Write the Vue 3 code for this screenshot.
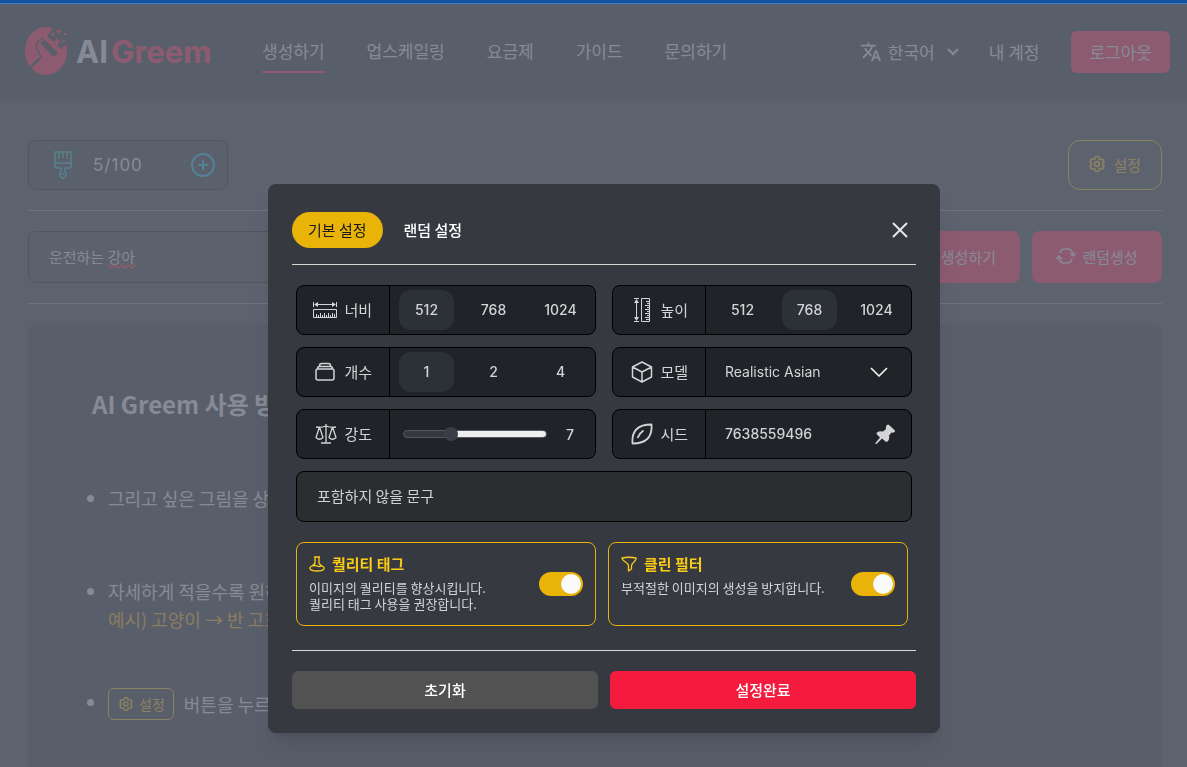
<script setup>
import { ref, computed } from 'vue';

const menu = ['생성하기', '업스케일링', '요금제', '가이드', '문의하기'];
const prompt = ref('운전하는 강아');

const sizes = [512, 768, 1024];
const counts = [1, 2, 4];

const gear = 'M9.594 3.94c.09-.542.56-.94 1.11-.94h2.593c.55 0 1.02.398 1.11.94l.213 1.281c.063.374.313.686.645.87.074.04.147.083.22.127.324.196.72.257 1.075.124l1.217-.456a1.125 1.125 0 011.37.49l1.296 2.247a1.125 1.125 0 01-.26 1.431l-1.003.827c-.293.24-.438.613-.431.992a6.759 6.759 0 010 .255c-.007.378.138.75.43.99l1.005.828c.424.35.534.954.26 1.43l-1.298 2.247a1.125 1.125 0 01-1.369.491l-1.217-.456c-.355-.133-.75-.072-1.076.124a6.57 6.57 0 01-.22.128c-.331.183-.581.495-.644.869l-.213 1.28c-.09.543-.56.941-1.11.941h-2.594c-.55 0-1.02-.398-1.11-.94l-.213-1.281c-.062-.374-.312-.686-.644-.87a6.52 6.52 0 01-.22-.127c-.325-.196-.72-.257-1.076-.124l-1.217.456a1.125 1.125 0 01-1.369-.49l-1.297-2.247a1.125 1.125 0 01.26-1.431l1.004-.827c.292-.24.437-.613.43-.992a6.932 6.932 0 010-.255c.007-.378-.138-.75-.43-.99l-1.004-.828a1.125 1.125 0 01-.26-1.43l1.297-2.247a1.125 1.125 0 011.37-.491l1.216.456c.356.133.751.072 1.076-.124.072-.044.146-.087.22-.128.332-.183.582-.495.644-.869l.214-1.281z';

const tab = ref('basic');
const width = ref(512);
const height = ref(768);
const count = ref(1);
const strength = ref(7);
const model = ref('Realistic Asian');
const seed = ref('7638559496');
const negative = ref('');
const quality = ref(true);
const clean = ref(true);
const open = ref(true);

const fill = computed(() => ((strength.value - 1) / 19) * 100 + '%');

const reset = () => {
  width.value = 512;
  height.value = 768;
  count.value = 1;
  strength.value = 7;
  negative.value = '';
  quality.value = true;
  clean.value = true;
};
</script>

<template>
  <div class="page">
    <div class="loading-bar"></div>

    <header class="header">
      <a href="#" class="logo">
        <svg width="44" height="50" viewBox="0 0 44 50">
          <ellipse cx="21" cy="24" rx="21" ry="24" fill="#f41b3f" />
          <path d="M29 0h15v14l-8 8L22 9z" fill="#27262c" />
          <path d="M15 16l5-3 13 13-5 4z" fill="#27262c" />
          <path d="M19 11l-6 3-2 6 5 10-3 4" fill="none" stroke="#27262c" stroke-width="1.500" />
          <path d="M14 32L3 43" stroke="#27262c" stroke-width="3" />
          <path d="M32 10l1.300 3.700L37 15l-3.700 1.300L32 20l-1.300-3.700L27 15l3.700-1.300zM34 1l1 2.500 2.500 1L35 5.500 34 8l-1-2.500-2.500-1 2.500-1zM28 5l.8 1.700 1.700.8-1.700.8L28 10l-.8-1.700-1.700-.8 1.700-.8zM39 6h2v2h-2zM38 13h2v2h-2zM36 10h1v1h-1z" fill="#f41b3f" />
        </svg>
        <span class="logo-text">AI <b>Greem</b></span>
      </a>
      <nav class="menu">
        <a v-for="(item, i) in menu" :key="item" href="#" :class="{ active: i === 0 }">{{ item }}</a>
      </nav>
      <div class="account">
        <button class="lang">
          <svg width="22" height="22" viewBox="0 0 24 24" fill="currentColor">
            <path d="M12.87 15.07l-2.54-2.51.03-.03c1.74-1.94 2.98-4.17 3.71-6.53H17V4h-7V2H8v2H1v2h11.17C11.5 7.92 10.44 9.75 9 11.35 8.07 10.32 7.3 9.19 6.69 8h-2c.73 1.63 1.73 3.17 2.98 4.56l-5.09 5.02L4 19l5-5 3.11 3.11.76-2.04zM18.5 10h-2L12 22h2l1.12-3h4.75L21 22h2l-4.5-12zm-2.62 7l1.62-4.33L19.12 17h-3.24z" />
          </svg>
          <span>한국어</span>
          <svg class="caret" width="12" height="8" viewBox="0 0 12 8" fill="none" stroke="currentColor" stroke-width="2">
            <path d="M1 1l5 5 5-5" />
          </svg>
        </button>
        <a href="#">내 계정</a>
        <button class="logout">로그아웃</button>
      </div>
    </header>

    <main class="content">
      <div class="toolbar">
        <div class="credit">
          <svg width="20" height="28" viewBox="0 0 20 28" fill="none" stroke="url(#teal)" stroke-width="1.5">
            <defs>
              <linearGradient id="teal" x1="0" y1="0" x2="0" y2="1">
                <stop offset="0" stop-color="#1fae8d" />
                <stop offset="1" stop-color="#17a8e0" />
              </linearGradient>
            </defs>
            <path d="M2 1h16v14q0 2-2 2h-4v4q2 2 0 5-2 2-4 0-2-3 0-5v-4H4q-2 0-2-2zM2 12h16M6 1v7M10 1v6M14 1v7M10 22v2" />
          </svg>
          <span>5/100</span>
          <button class="plus" aria-label="충전">
            <svg width="24" height="24" viewBox="0 0 24 24" fill="none" stroke="#1badd8" stroke-width="2">
              <circle cx="12" cy="12" r="11" />
              <path d="M12 7v10M7 12h10" />
            </svg>
          </button>
        </div>
        <button class="setting" @click="open = true">
          <svg width="16" height="16" viewBox="2 2 20 20" fill="none" stroke="currentColor" stroke-width="2">
            <path :d="gear" />
            <circle cx="12" cy="12" r="3" />
          </svg>
          설정
        </button>
      </div>

      <div class="prompt-row">
        <div class="prompt">
          <input v-model="prompt" type="text" aria-label="프롬프트" spellcheck="false" />
          <svg class="squiggle" width="28" height="5" viewBox="0 0 28 5" fill="none" stroke="#ff2020" stroke-width="1.500">
            <path d="M0 1l3 3 4-3 3 3 4-3 3 3 4-3 3 3 4-3" />
          </svg>
        </div>
        <button class="red create">생성하기</button>
        <button class="red">
          <svg width="20" height="16" viewBox="0 0 20 16" fill="none" stroke="currentColor" stroke-width="1.5">
            <path d="M4 5q1-4 5-4h3q4 0 5 5v1M14 5l3 3 3-3M16 11q-1 4-5 4H8q-4 0-5-5V9M0 11l3-3 3 3" />
          </svg>
          랜덤생성
        </button>
      </div>

      <section class="guide">
        <h2>AI Greem 사용 방법</h2>
        <ul>
          <li>그리고 싶은 그림을 상상해보세요.</li>
          <li>
            자세하게 적을수록 원하는 그림이 나와요.
            <p>예시) 고양이 → 반 고흐 스타일의 고양이</p>
          </li>
          <li class="with-button">
            <button class="setting small">
              <svg width="14" height="14" viewBox="2 2 20 20" fill="none" stroke="currentColor" stroke-width="2">
                <path :d="gear" />
                <circle cx="12" cy="12" r="3" />
              </svg>
              설정
            </button>
            버튼을 누르면 설정을 바꿀 수 있어요.
          </li>
        </ul>
      </section>
    </main>

    <div v-if="open" class="overlay">
      <div class="modal" role="dialog" aria-modal="true">
        <div class="tabs">
          <button :class="{ on: tab === 'basic' }" @click="tab = 'basic'">기본 설정</button>
          <button :class="{ on: tab === 'random' }" @click="tab = 'random'">랜덤 설정</button>
          <button class="close" aria-label="닫기" @click="open = false">
            <svg width="16" height="16" viewBox="0 0 16 16" stroke="#e2e5ea" stroke-width="2">
              <path d="M1 1l14 14M15 1L1 15" />
            </svg>
          </button>
        </div>

        <div class="fields">
          <div class="field">
            <div class="name wide">
              <svg width="26" height="18" viewBox="0 0 26 18" fill="none" stroke="currentColor">
                <path d="M1.500 1v5M24.500 1v5M3 3.500h20" />
                <path d="M6 1v5L2 3.500zM20 1v5l4-2.500z" fill="currentColor" stroke="none" />
                <path d="M1.500 8.500h23v8h-23zM4.500 13v3M6.500 14v2M8.500 12v4M10.500 14v2M12.500 12v4M14.500 14v2M16.500 12v4M18.500 14v2M20.500 12v4M22.500 13v3" />
              </svg>
              <span>너비</span>
            </div>
            <div class="options">
              <button v-for="n in sizes" :key="n" :class="{ on: width === n }" @click="width = n">{{ n }}</button>
            </div>
          </div>

          <div class="field">
            <div class="name">
              <svg width="22" height="26" viewBox="-2 0 22 26" fill="none" stroke="currentColor">
                <path d="M1 1.500h5M1 24.500h5M3.500 3v20" />
                <path d="M1 6h5L3.500 2zM1 20h5l-2.500 4z" fill="currentColor" stroke="none" />
                <path d="M8.500 1.500h8v23h-8zM13 4.500h3M14 6.500h2M12 8.500h4M14 10.500h2M12 12.500h4M14 14.500h2M12 16.500h4M14 18.500h2M12 20.500h4M13 22.500h3" />
              </svg>
              <span>높이</span>
            </div>
            <div class="options">
              <button v-for="n in sizes" :key="n" :class="{ on: height === n }" @click="height = n">{{ n }}</button>
            </div>
          </div>

          <div class="field">
            <div class="name">
              <svg width="20" height="20" viewBox="0 0 20 20" fill="none" stroke="currentColor" stroke-width="1.500">
                <path d="M3 7h14q2 0 2 2v7q0 2-2 2H3q-2 0-2-2V9q0-2 2-2zM2.500 7q0-2.500 2-2.500h11q2 0 2 2.500M4.500 4q0-2.500 2-2.500h7q2 0 2 2.500" />
              </svg>
              <span>개수</span>
            </div>
            <div class="options">
              <button v-for="n in counts" :key="n" :class="{ on: count === n }" @click="count = n">{{ n }}</button>
            </div>
          </div>

          <div class="field">
            <label class="name" for="model">
              <svg width="22" height="22" viewBox="0 0 22 22" fill="none" stroke="currentColor" stroke-width="1.500" stroke-linejoin="round">
                <path d="M11 1l9.500 5v10L11 21l-9.500-5V6zM1.500 6L11 11l9.500-5M11 11v10" />
              </svg>
              <span>모델</span>
            </label>
            <div class="value">
              <select id="model" v-model="model">
                <option>Realistic Asian</option>
                <option>Realistic</option>
                <option>Anime</option>
              </select>
              <svg class="arrow" width="18" height="10" viewBox="0 0 18 10" fill="none" stroke="#fff" stroke-width="1.500">
                <path d="M1 1l8 8 8-8" />
              </svg>
            </div>
          </div>

          <div class="field">
            <label class="name" for="strength">
              <svg width="22" height="20" viewBox="0 0 22 20" fill="none" stroke="currentColor" stroke-width="1.300" stroke-linejoin="round">
                <path d="M11 0v19M6 19h10M1 3q5 1 10-1 5 2 10 1M4.500 3L1 13.500q3.500 3.500 7 0zM17.500 3L14 13.500q3.500 3.500 7 0z" />
              </svg>
              <span>강도</span>
            </label>
            <div class="slide">
              <input id="strength" v-model.number="strength" type="range" min="1" max="20" :style="{ '--fill': fill }" />
              <output for="strength">{{ strength }}</output>
            </div>
          </div>

          <div class="field">
            <label class="name" for="seed">
              <svg width="22" height="22" viewBox="0 0 22 22" fill="none" stroke="currentColor" stroke-width="1.800" stroke-linejoin="round">
                <path d="M1.500 20.500Q0 1.500 20.500 1.500 22 20.500 1.500 20.500zM6.500 15q2-5 6-7.500" />
              </svg>
              <span>시드</span>
            </label>
            <div class="value">
              <input id="seed" v-model="seed" type="text" />
              <button class="pin" aria-label="시드 고정">
                <svg width="20" height="20" viewBox="0 0 20 20" fill="currentColor">
                  <path d="M12 1q1-1 2 0l5.500 5q1 1 0 2-1.500 1-3 .5l-2.500 3q1 4-1.500 6-1 .8-2 0l-3.500-3L1.500 20 0 19.500l5-6-3-3q-1-1 0-2 2.500-2 6-1l3-2.500q-.5-3 1-4z" />
                </svg>
              </button>
            </div>
          </div>

          <input v-model="negative" class="negative" type="text" placeholder="포함하지 않을 문구" aria-label="포함하지 않을 문구" />
        </div>

        <div class="cards">
          <label class="card">
            <span class="text">
              <strong>
                <svg width="16" height="16" viewBox="0 0 16 16" fill="none" stroke="currentColor" stroke-width="1.300" stroke-linejoin="round">
                  <path d="M5 1h6M6 1v6q-.5 2-4 3.500-2 1.500-.5 3 1.500 1.500 6.500 1.500t6.500-1.500q1.500-1.500-.5-3Q10.500 9 10 7V1M3 10q3-1 5 0t5 0" />
                </svg>
                퀄리티 태그
              </strong>
              <span>이미지의 퀄리티를 향상시킵니다.<br />퀄리티 태그 사용을 권장합니다.</span>
            </span>
            <input v-model="quality" type="checkbox" />
          </label>
          <label class="card">
            <span class="text">
              <strong>
                <svg width="16" height="16" viewBox="0 0 16 16" fill="none" stroke="currentColor" stroke-width="1.300" stroke-linejoin="round">
                  <path d="M1 2q7-1.500 14 0 .5 1.500-2 4-2.500 2-2.500 4v3l-3 2v-5q0-2-3-4-3.500-2.500-3.500-4z" />
                </svg>
                클린 필터
              </strong>
              <span>부적절한 이미지의 생성을 방지합니다.</span>
            </span>
            <input v-model="clean" type="checkbox" />
          </label>
        </div>

        <div class="actions">
          <button @click="reset">초기화</button>
          <button class="done" @click="open = false">설정완료</button>
        </div>
      </div>
    </div>
  </div>
</template>

<style>
body {
  background: #363940;
}
</style>

<style scoped>
* {
  box-sizing: border-box;
}

.page {
  height: 100vh;
  overflow: hidden;
  background: #36373c;
  color: #d4d4d8;
  font-family: "Noto Sans CJK KR", sans-serif;
  font-size: 15px;
}

button, input, select {
  font: inherit;
  color: inherit;
  border: none;
  background: none;
  padding: 0;
  margin: 0;
  outline: none;
}

button {
  cursor: pointer;
}

a {
  color: inherit;
  text-decoration: none;
}

svg {
  display: block;
  flex: none;
}

.loading-bar {
  position: fixed;
  top: 0;
  left: 0;
  right: 0;
  z-index: 20;
  height: 4px;
  background: #15539e;
  border-bottom: 1px solid #3c7cc4;
}

.header {
  display: flex;
  align-items: center;
  height: 100px;
  padding: 4px 17px 0 25px;
  background: #26272c;
  font-size: 17px;
}

.logo {
  display: flex;
  align-items: center;
  gap: 7px;
  width: 237px;
}

.logo-text {
  font-family: Inter, sans-serif;
  font-size: 31px;
  font-weight: 700;
  line-height: 40px;
  white-space: nowrap;
}

.logo-text b {
  color: #f41b3f;
  font-weight: 700;
  margin-left: -4px;
}

.menu {
  display: flex;
  gap: 42px;
}

.menu a {
  padding: 8px 0;
  line-height: 24px;
  border-bottom: 2px solid transparent;
}

.menu a.active {
  border-color: #f41b3f;
}

.account {
  display: flex;
  align-items: center;
  margin-left: auto;
}

.account a, .lang span {
  padding-bottom: 2px;
}

.lang {
  display: flex;
  align-items: center;
  gap: 6px;
  margin-right: 30px;
}

.caret {
  margin-left: 6px;
}

.logout {
  height: 42px;
  padding: 0 18px 2px;
  margin-left: 32px;
  border-radius: 6px;
  background: #f41b3f;
}

.content {
  padding: 40px 25px 0 28px;
}

.toolbar {
  display: flex;
  justify-content: space-between;
  padding-bottom: 20px;
  border-bottom: 1px solid #74747c;
}

.credit {
  display: flex;
  align-items: center;
  width: 200px;
  height: 50px;
  padding: 0 12px 0 24px;
  border: 1px solid #000;
  border-radius: 8px;
  background: #2b2c31;
  font-family: Inter, sans-serif;
  font-size: 17px;
  letter-spacing: 1px;
}

.credit span {
  margin-left: 20px;
}

.plus {
  margin-left: auto;
}

.setting {
  display: flex;
  align-items: center;
  gap: 8px;
  height: 50px;
  padding: 0 20px 2px;
  border: 1px solid #eab308;
  border-radius: 12px;
  color: #eab308;
}

.prompt-row {
  display: flex;
  gap: 12px;
  padding: 20px 0;
  border-bottom: 1px solid #74747c;
}

.prompt {
  position: relative;
  flex: 1;
}

.prompt input {
  width: 100%;
  height: 52px;
  padding: 0 20px 2px;
  border: 1px solid #000;
  border-radius: 8px;
  background: #313237;
}

.squiggle {
  position: absolute;
  left: 80px;
  top: 33px;
}

.red {
  display: flex;
  align-items: center;
  justify-content: center;
  gap: 6px;
  width: 130px;
  height: 52px;
  padding-bottom: 2px;
  border-radius: 8px;
  background: #f41b3f;
}

.red.create {
  justify-content: flex-end;
  padding-right: 24px;
}

.guide {
  margin-top: 20px;
  padding: 62px 64px;
  min-height: 600px;
  border-radius: 8px;
  background: #26272c;
}

.guide h2 {
  margin: 0 0 62px;
  font-size: 24px;
  line-height: 36px;
}

.guide ul {
  margin: 0;
  padding: 0 0 0 16px;
  list-style: none;
  font-size: 18px;
  line-height: 28px;
}

.guide li {
  position: relative;
  margin-bottom: 65px;
}

.guide li::before {
  content: "";
  position: absolute;
  left: -21px;
  top: 11px;
  width: 7px;
  height: 7px;
  border-radius: 50%;
  background: #d4d4d8;
}

.guide p {
  margin: 0 0 -10px;
  color: #e59a0b;
}

.guide .with-button {
  display: flex;
  align-items: center;
  gap: 10px;
}

.setting.small {
  gap: 6px;
  height: 32px;
  padding: 0 8px 1px 10px;
  border-radius: 6px;
  font-size: 14px;
}

.overlay {
  position: fixed;
  inset: 0;
  z-index: 10;
  display: flex;
  align-items: flex-end;
  justify-content: center;
  padding: 0 0 34px 21px;
  background: rgba(107, 114, 128, 0.75);
}

.modal {
  width: 100%;
  max-width: 672px;
  padding: 28px 24px 24px;
  border-radius: 8px;
  background: #363940;
  box-shadow: 0 20px 25px -5px rgba(0, 0, 0, 0.1), 0 8px 10px -6px rgba(0, 0, 0, 0.1);
}

.tabs {
  display: flex;
  align-items: center;
  gap: 5px;
  padding-bottom: 16px;
  border-bottom: 1px solid #d6d9d2;
}

.tabs button {
  height: 36px;
  padding: 0 16px 2px;
  border-radius: 18px;
  color: #fff;
  font-weight: 500;
}

.tabs button.on {
  background: #eab308;
  color: #16181c;
  font-weight: 400;
}

.tabs .close {
  margin-left: auto;
  padding: 0 8px;
}

.fields {
  display: grid;
  grid-template-columns: repeat(2, minmax(0, 1fr));
  gap: 12px 16px;
  padding: 20px 4px;
}

.field {
  display: flex;
  height: 50px;
  border: 1px solid #000;
  border-radius: 8px;
  background: #202327;
}

.name {
  flex: none;
  display: flex;
  align-items: center;
  justify-content: space-between;
  width: 93px;
  padding: 0 17px 0 18px;
  border-right: 1px solid #000;
}

.name.wide {
  padding-left: 15px;
}

.name span {
  padding-bottom: 2px;
}

.options {
  flex: 1;
  display: grid;
  grid-template-columns: repeat(3, minmax(0, 1fr));
  padding: 4px 1px 4px 3px;
  font-family: Inter, sans-serif;
  font-size: 14px;
  font-weight: 500;
}

.options button {
  margin: 0 6px;
  padding-bottom: 1px;
  border-radius: 12px;
}

.options .on {
  background: #2c3037;
}

.value {
  position: relative;
  flex: 1;
  display: flex;
  align-items: center;
  min-width: 0;
  font-family: Inter, sans-serif;
  font-size: 14px;
  font-weight: 500;
}

.value select, .value input {
  appearance: none;
  flex: 1;
  min-width: 0;
  height: 100%;
  padding: 0 19px 1px;
}

.value select {
  font-weight: 400;
}

.arrow {
  position: absolute;
  right: 23px;
  pointer-events: none;
}

.pin {
  margin-right: 16px;
}

.slide {
  flex: 1;
  display: flex;
  align-items: center;
  min-width: 0;
  padding: 0 21px 0 13px;
  gap: 19px;
  font-family: Inter, sans-serif;
  font-size: 14px;
  font-weight: 500;
}

.slide input {
  appearance: none;
  flex: 1;
  min-width: 0;
  height: 8px;
  border: 1px solid #55585c;
  border-radius: 4px;
  background: linear-gradient(to right, #363940 var(--fill), #efefef var(--fill));
}

.slide input::-webkit-slider-thumb {
  appearance: none;
  width: 14px;
  height: 14px;
  border-radius: 50%;
  background: #3b3f45;
}

.negative {
  grid-column: 1 / -1;
  height: 51px;
  padding: 0 20px 2px;
  border: 1px solid #000;
  border-radius: 8px;
  background: #2b2e31;
}

.negative::placeholder {
  color: #d0d1d3;
  opacity: 1;
}

.cards {
  display: grid;
  grid-template-columns: 1fr 1fr;
  gap: 12px;
  padding: 0 8px 24px 4px;
  border-bottom: 1px solid #d8d8d8;
}

.card {
  display: flex;
  align-items: center;
  justify-content: space-between;
  height: 84px;
  padding: 10px 12px;
  border: 1px solid #eab308;
  border-radius: 8px;
  font-size: 13px;
  line-height: 16px;
}

.text {
  align-self: flex-start;
  display: flex;
  flex-direction: column;
}

.text strong {
  display: flex;
  align-items: center;
  gap: 7px;
  margin-bottom: 5px;
  color: #facc15;
  font-size: 15px;
  line-height: 22px;
}

.card input {
  appearance: none;
  width: 44px;
  height: 24px;
  padding: 2px;
  border-radius: 12px;
  background: #6b7280;
}

.card input::before {
  content: "";
  display: block;
  width: 20px;
  height: 20px;
  border-radius: 50%;
  background: #fafafa;
}

.card input:checked {
  background: #eab308;
}

.card input:checked::before {
  margin-left: 20px;
}

.actions {
  display: grid;
  grid-template-columns: 1fr 1fr;
  gap: 12px;
  padding-top: 20px;
}

.actions button {
  height: 38px;
  padding-bottom: 2px;
  border-radius: 6px;
  background: #525252;
  color: #fff;
  font-weight: 500;
}

.actions .done {
  background: #f41b3f;
}
</style>
